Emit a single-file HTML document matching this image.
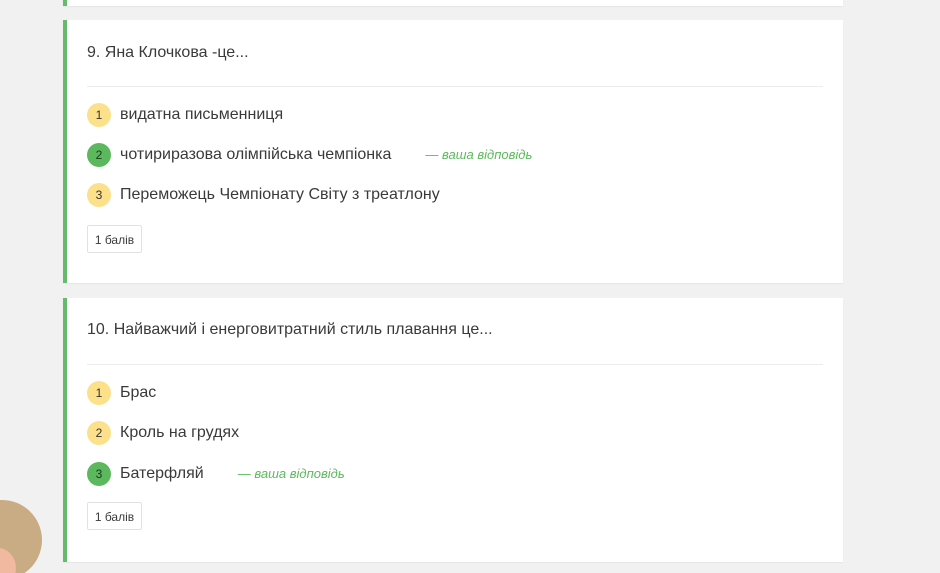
<!DOCTYPE html>
<html style="overflow:hidden;width:940px;height:573px"><head><meta charset="utf-8"><style>
body{margin:0;width:940px;height:573px;background:#f1f1f1;position:relative;overflow:hidden;font-family:"Liberation Sans",Arial,sans-serif;color:#3a3a3a}
.card{position:absolute;left:63px;width:780px;background:#fff;border-left:4px solid #66bb6a;box-sizing:border-box;box-shadow:0 1px 1px rgba(0,0,0,.05)}
.q{position:absolute;left:20px;font-size:16px}
.hr{position:absolute;left:20px;right:20px;top:66px;border-top:1px solid #ececec}
.opt{position:absolute;left:20px;height:24px;font-size:16px;line-height:24px}
.n{display:inline-block;width:24px;height:24px;border-radius:50%;background:#fde08a;font-size:12px;text-align:center;line-height:24px;vertical-align:top;margin-right:9px;color:#333}
.n.g{background:#5cb85c;color:#1e3a1e}
.ans{color:#5cb85c;font-style:italic;font-size:13px;margin-left:34px}
.pts{position:absolute;left:20px;width:55px;height:28px;border:1px solid #e2e2e2;border-radius:2px;font-size:12px;line-height:28px;text-align:center;box-sizing:border-box}
</style></head><body>
<div class="card" style="top:-20px;height:26px"></div>
<div class="card" style="top:20px;height:263px">
<div class="q" style="top:24px">9. Яна Клочкова -це...</div>
<div class="hr"></div>
<div class="opt" style="top:83px"><span class="n">1</span>видатна письменниця</div>
<div class="opt" style="top:123px"><span class="n g">2</span>чотириразова олімпійська чемпіонка<span class="ans">— ваша відповідь</span></div>
<div class="opt" style="top:163px"><span class="n">3</span>Переможець Чемпіонату Світу з треатлону</div>
<div class="pts" style="top:205px">1 балів</div>
</div>
<div class="card" style="top:298px;height:264px">
<div class="q" style="top:23px">10. Найважчий і енерговитратний стиль плавання це...</div>
<div class="hr"></div>
<div class="opt" style="top:83px"><span class="n">1</span>Брас</div>
<div class="opt" style="top:123px"><span class="n">2</span>Кроль на грудях</div>
<div class="opt" style="top:164px"><span class="n g">3</span>Батерфляй<span class="ans">— ваша відповідь</span></div>
<div class="pts" style="top:204px">1 балів</div>
</div>
<div style="position:absolute;left:-38px;top:500px;width:80px;height:80px;border-radius:50%;background:#c9ab84"></div>
<div style="position:absolute;left:-20px;top:548px;width:36px;height:40px;border-radius:50%;background:#f0b9a0"></div>
</body></html>
